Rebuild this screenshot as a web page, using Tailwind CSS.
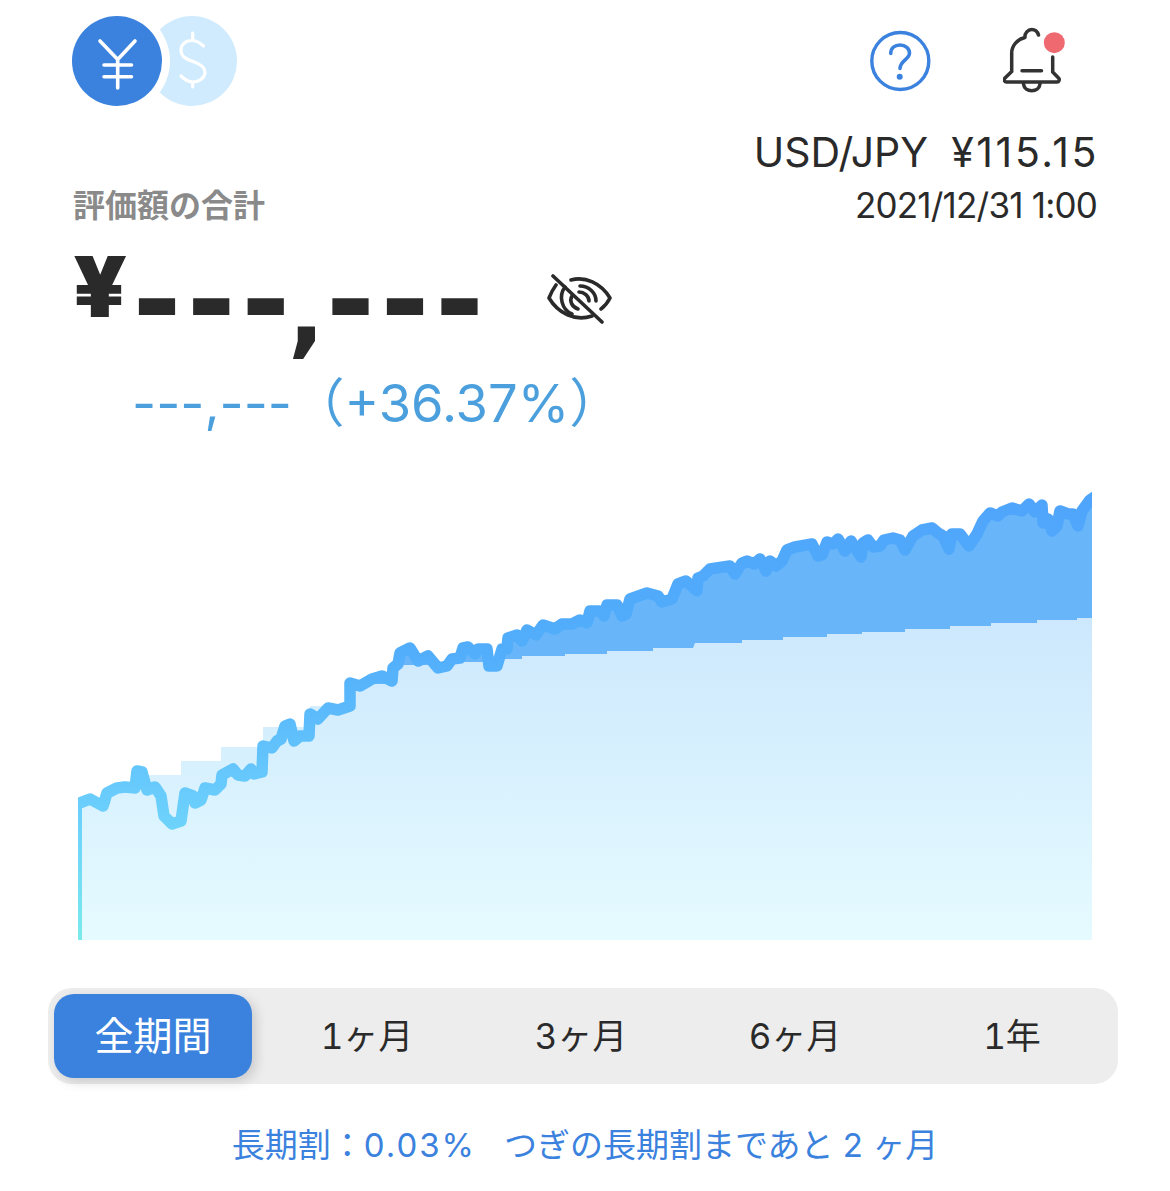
<!DOCTYPE html>
<html lang="ja">
<head>
  <meta charset="UTF-8" />
  <title>評価額</title>
  <script src="https://cdn.jsdelivr.net/npm/@tailwindcss/browser@4"></script>
</head>
<body class="w-[1170px] h-[1191px] overflow-hidden bg-white font-['Inter','Noto_Sans_CJK_JP',sans-serif] text-[#2a2a2a]">
  <!-- top icons -->
  <header class="flex justify-between pt-[16px] pl-[72px] pr-[105px] h-[127px]">
    <svg width="166" height="90" viewBox="72 16 166 90" fill="none" stroke-linecap="round" stroke-linejoin="round">
      <circle cx="192" cy="61" r="45" fill="#d0ebfd" />
      <circle cx="117" cy="61" r="53" fill="#ffffff" />
      <circle cx="117" cy="61" r="45" fill="#3b82de" />
      <path d="M100 41 L117.7 59.5 L135 41 M117.7 59.5 V88 M104 65 H131.5 M104 76.7 H131.5" stroke="#ffffff" stroke-width="3.6" />
      <path d="M192.7 33 V40 M192.7 82 V87 M203.5 46 C199 42 196 40.5 192 40.5 C185 40.5 181 45 181 50 C181 57 187 59.5 193 61.5 C199 63.5 205 66.5 205 72 C205 78 199 82 193 82 C188 82 184.5 79.5 181 76" stroke="#ffffff" stroke-width="3.2" />
    </svg>
    <div class="flex gap-[74px]">
      <svg width="62" height="90" viewBox="869 16 62 90" fill="none" stroke-linecap="round" stroke-linejoin="round">
        <circle cx="900.3" cy="61" r="28.5" stroke="#3b82de" stroke-width="3.4" />
        <path d="M890.8 53.5 C890.8 48 895 45 900 45 C905.5 45 909.5 48.5 909.5 53 C909.5 59.5 900 60.5 900 68.5" stroke="#3b82de" stroke-width="3.6" />
        <circle cx="899.7" cy="76.8" r="3" fill="#3b82de" />
      </svg>
      <svg width="62" height="90" viewBox="1003 16 62 90" fill="none" stroke-linecap="round" stroke-linejoin="round" class="-ml-[2px]">
        <path d="M1011.7 71.5 V53 C1011.7 45 1018 39 1025 37.5 C1024.5 33 1028 29.5 1031.7 29.5 C1035 29.5 1037.5 31.5 1038.5 35 M1052.7 57 V72 L1058.5 78 C1060 79.5 1059 82 1057 82 H1006.5 C1004.5 82 1003.5 79.5 1005 78 L1011.7 71.5 M1022 70.7 H1041.5 M1023.5 84 C1024.5 93 1039 93 1040 84" stroke="#333333" stroke-width="3.5" />
        <circle cx="1054.3" cy="42.7" r="10.5" fill="#ef6a70" />
      </svg>
    </div>
  </header>

  <!-- rate -->
  <p class="text-right pr-[71px] text-[41px] leading-[50px] whitespace-pre">USD/JPY  <span class="tracking-[2.6px]">¥115.15</span></p>
  <div class="flex justify-between items-end pl-[73px] pr-[73px] mt-[6px]">
    <p class="text-[32px] leading-[42px] font-bold text-[#8a8a8a]">評価額の合計</p>
    <p class="text-[35px] leading-[44px] tracking-[-0.8px]">2021/12/31 1:00</p>
  </div>

  <!-- total -->
  <div class="flex items-start pl-[73px] h-[134px] mt-[12px]">
    <span class="text-[84px] leading-[100px] font-black -mt-[2px] scale-x-110 origin-left">¥</span>
    <span class="font-['DejaVu_Sans',sans-serif] text-[118px] leading-[100px] font-bold tracking-[5.5px] mt-[11px] ml-[10px]">--<span class="tracking-[-2.5px]">-</span><span class="relative top-[4px] text-[98px] tracking-[1px]">,</span>---</span>
    <svg width="66" height="50" viewBox="547 274 66 50" fill="none" stroke="#2a2a2a" stroke-width="3.6" stroke-linecap="round" stroke-linejoin="round" class="ml-[57px] mt-[35px]">
      <path d="M571 280 C585 276 601 283 610 298 C608 302 605 306 601 309 M556 285 C553 289 551 293 549 298 C558 313 575 322 592 316" />
      <path d="M565 287 C558 296 562 310 572 314 M580 286 C589 286 596 293 596 301" />
      <path d="M579 292 C584 292 589 296 589 301 M572 296 C569 301 572 307 578 309" />
      <path d="M553 276 L602 322" />
    </svg>
  </div>
  <p class="pl-[132px] text-[52.5px] leading-[60px] text-[#4a9fdc] whitespace-pre">---,---<span>（+36.37%）</span></p>

  <!-- chart -->
  <svg width="1014" height="450" viewBox="78 490 1014 450" class="ml-[78px] mt-[57px]" fill="none">
    <defs>
      <linearGradient id="stepFill" gradientUnits="userSpaceOnUse" x1="0" y1="620" x2="0" y2="940">
        <stop offset="0" stop-color="#cde8fd" />
        <stop offset="1" stop-color="#e5fbff" />
      </linearGradient>
      <linearGradient id="lineStroke" gradientUnits="userSpaceOnUse" x1="0" y1="500" x2="0" y2="940">
        <stop offset="0" stop-color="#4fa5fb" />
        <stop offset="0.35" stop-color="#52aefb" />
        <stop offset="0.7" stop-color="#6bcffc" />
        <stop offset="1" stop-color="#7beaec" />
      </linearGradient>
    </defs>
    <path fill="#68b6f9" d="M80 940 V802 L90 798 L103 805 L107 792 L117 787 L125 786 L135 787 L137 770 L142 771 L147 789 L155 786 L161 795 L164 815 L172 823 L181 820 L185 792 L193 795 L195 802 L201 799 L205 787 L215 789 L221 783 L222 774 L233 768 L238 774 L245 775 L251 768 L254 773 L262 771 L263 745 L272 747 L277 740 L281 738 L285 725 L290 723 L294 740 L300 735 L309 735 L310 713 L318 718 L328 707 L338 709 L350 705 L350 682 L360 685 L372 678 L382 675 L392 680 L393 667 L398 663 L400 652 L410 647 L418 660 L428 655 L438 667 L447 665 L452 658 L460 657 L463 647 L468 646 L475 653 L478 648 L487 648 L489 665 L497 665 L502 648 L507 648 L508 637 L517 634 L522 640 L527 629 L536 634 L543 624 L555 628 L562 623 L572 623 L580 619 L587 622 L590 610 L600 610 L604 615 L607 604 L617 604 L622 615 L626 613 L630 598 L647 592 L658 595 L662 601 L672 598 L678 583 L686 580 L697 590 L698 577 L703 575 L710 568 L730 565 L735 573 L742 562 L747 560 L754 563 L760 558 L766 570 L770 560 L776 565 L782 560 L787 549 L795 546 L812 543 L818 555 L822 554 L827 541 L833 543 L838 538 L845 550 L851 540 L861 556 L863 542 L868 539 L873 546 L880 545 L884 539 L893 537 L900 539 L905 549 L913 535 L922 529 L932 527 L938 532 L943 535 L949 548 L952 533 L960 533 L969 545 L977 533 L983 520 L990 512 L998 515 L1002 511 L1012 507 L1022 510 L1029 503 L1035 511 L1042 504 L1043 522 L1048 518 L1052 530 L1057 525 L1060 510 L1068 513 L1073 513 L1078 525 L1082 510 L1090 499 L1092 498 V940 Z" />
    <path fill="url(#stepFill)" d="M78 940 V804 H110 V790 H140 V775 H181 V761 H221 V747 H263 V727 H310 V706 H350 V684 H396 V665 H452 V662 H502 V659 H522 V656 H565 V654 H607 V651 H653 V648 H693 L695 643 H742 V640 H783 V637 H827 V634 H862 V632 H905 V629 H950 V626 H991 V623 H1037 V620 H1077 V618 H1092 V940 Z" />
    <path transform="translate(0 1)" stroke="url(#lineStroke)" stroke-width="11.5" stroke-linejoin="round" stroke-linecap="round" d="M80 802 L90 798 L103 805 L107 792 L117 787 L125 786 L135 787 L137 770 L142 771 L147 789 L155 786 L161 795 L164 815 L172 823 L181 820 L185 792 L193 795 L195 802 L201 799 L205 787 L215 789 L221 783 L222 774 L233 768 L238 774 L245 775 L251 768 L254 773 L262 771 L263 745 L272 747 L277 740 L281 738 L285 725 L290 723 L294 740 L300 735 L309 735 L310 713 L318 718 L328 707 L338 709 L350 705 L350 682 L360 685 L372 678 L382 675 L392 680 L393 667 L398 663 L400 652 L410 647 L418 660 L428 655 L438 667 L447 665 L452 658 L460 657 L463 647 L468 646 L475 653 L478 648 L487 648 L489 665 L497 665 L502 648 L507 648 L508 637 L517 634 L522 640 L527 629 L536 634 L543 624 L555 628 L562 623 L572 623 L580 619 L587 622 L590 610 L600 610 L604 615 L607 604 L617 604 L622 615 L626 613 L630 598 L647 592 L658 595 L662 601 L672 598 L678 583 L686 580 L697 590 L698 577 L703 575 L710 568 L730 565 L735 573 L742 562 L747 560 L754 563 L760 558 L766 570 L770 560 L776 565 L782 560 L787 549 L795 546 L812 543 L818 555 L822 554 L827 541 L833 543 L838 538 L845 550 L851 540 L861 556 L863 542 L868 539 L873 546 L880 545 L884 539 L893 537 L900 539 L905 549 L913 535 L922 529 L932 527 L938 532 L943 535 L949 548 L952 533 L960 533 L969 545 L977 533 L983 520 L990 512 L998 515 L1002 511 L1012 507 L1022 510 L1029 503 L1035 511 L1042 504 L1043 522 L1048 518 L1052 530 L1057 525 L1060 510 L1068 513 L1073 513 L1078 525 L1082 510 L1090 499 L1096 495" />
    <path stroke="url(#lineStroke)" stroke-width="4" d="M80 800 V940" />
  </svg>

  <!-- period tabs -->
  <div class="flex gap-[16px] ml-[48px] mt-[48px] w-[1070px] h-[96px] p-[6px] rounded-[24px] bg-[#ededed] text-[35px] tabular-nums">
    <button class="w-[198px] rounded-[20px] bg-[#3b82de] text-white text-[39px] shadow-[4px_4px_12px_rgba(0,0,0,0.15)]">全期間</button>
    <button class="w-[198px]">1ヶ月</button>
    <button class="w-[198px]">3ヶ月</button>
    <button class="w-[198px]">6ヶ月</button>
    <button class="w-[198px] pl-[6px]">1年</button>
  </div>

  <p class="mt-[37px] text-center text-[33px] leading-[48px] text-[#3b82de] whitespace-pre">長期割：<span class="tracking-[2px]">0.03%</span>   つぎの長期割まであと 2 ヶ月</p>
</body>
</html>
